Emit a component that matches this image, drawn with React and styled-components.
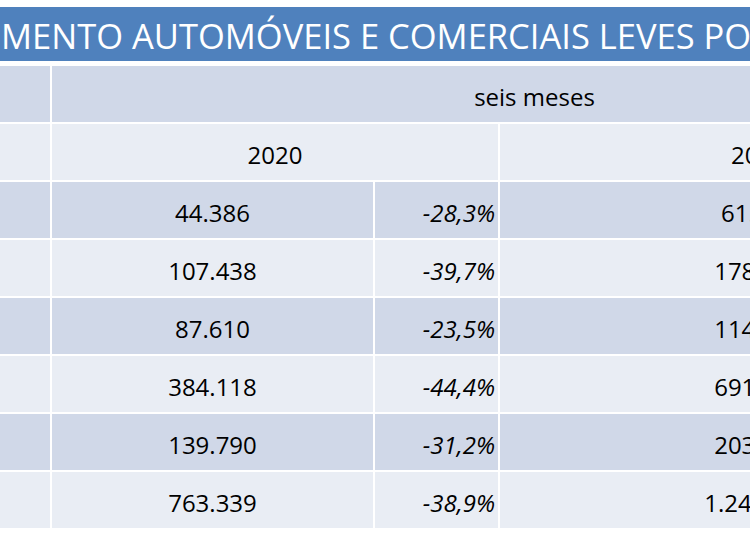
import React from "react";
import styled, { createGlobalStyle } from "styled-components";

const GlobalStyle = createGlobalStyle`
  html, body {
    margin: 0;
    padding: 0;
    background: #ffffff;
    overflow: hidden;
  }
  body {
    font-family: "Open Sans", "Liberation Sans", sans-serif;
    color: #000000;
  }
`;

const Page = styled.div`
  width: 750px;
  height: 536px;
  padding-top: 7px;
  box-sizing: border-box;
  overflow: hidden;
  background: #ffffff;
`;

const Title = styled.div`
  height: 54px;
  background: #4f81bd;
  color: #ffffff;
  font-size: 34.5px;
  display: flex;
  align-items: center;
  padding-left: 1px;
  padding-top: 3px;
  box-sizing: border-box;
  white-space: nowrap;
  overflow: hidden;
`;

const Table = styled.div`
  margin-top: 5px;
  display: grid;
  grid-template-columns: 50px 321px 123px 517px;
  grid-auto-rows: 56px;
  gap: 2px;
  width: max-content;
`;

const Cell = styled.div`
  grid-column: span ${({ $span }) => $span || 1};
  background: ${({ $tone }) => ($tone === "dark" ? "#d0d8e8" : "#e9edf4")};
  display: flex;
  align-items: center;
  justify-content: ${({ $align }) => ($align === "right" ? "flex-end" : "center")};
  padding: 5px ${({ $align }) => ($align === "right" ? "3px" : "0")} 0 0;
  box-sizing: border-box;
  font-size: 24px;
  font-style: ${({ $italic }) => ($italic ? "italic" : "normal")};
  white-space: nowrap;
`;

const rows = [
  { value: "44.386", change: "-28,3%", previous: "61.905" },
  { value: "107.438", change: "-39,7%", previous: "178.172" },
  { value: "87.610", change: "-23,5%", previous: "114.523" },
  { value: "384.118", change: "-44,4%", previous: "691.101" },
  { value: "139.790", change: "-31,2%", previous: "203.183" },
  { value: "763.339", change: "-38,9%", previous: "1.249.327" },
];

export default function App() {
  return (
    <>
      <GlobalStyle />
      <Page>
        <Title>MENTO AUTOMÓVEIS E COMERCIAIS LEVES PO</Title>
        <Table>
          <Cell $tone="dark" />
          <Cell $tone="dark" $span={3}>seis meses</Cell>

          <Cell $tone="light" />
          <Cell $tone="light" $span={2}>2020</Cell>
          <Cell $tone="light">2019</Cell>

          {rows.map((row, i) => {
            const tone = i % 2 === 0 ? "dark" : "light";
            return (
              <React.Fragment key={row.value}>
                <Cell $tone={tone} />
                <Cell $tone={tone}>{row.value}</Cell>
                <Cell $tone={tone} $align="right" $italic>
                  {row.change}
                </Cell>
                <Cell $tone={tone}>{row.previous}</Cell>
              </React.Fragment>
            );
          })}
        </Table>
      </Page>
    </>
  );
}
